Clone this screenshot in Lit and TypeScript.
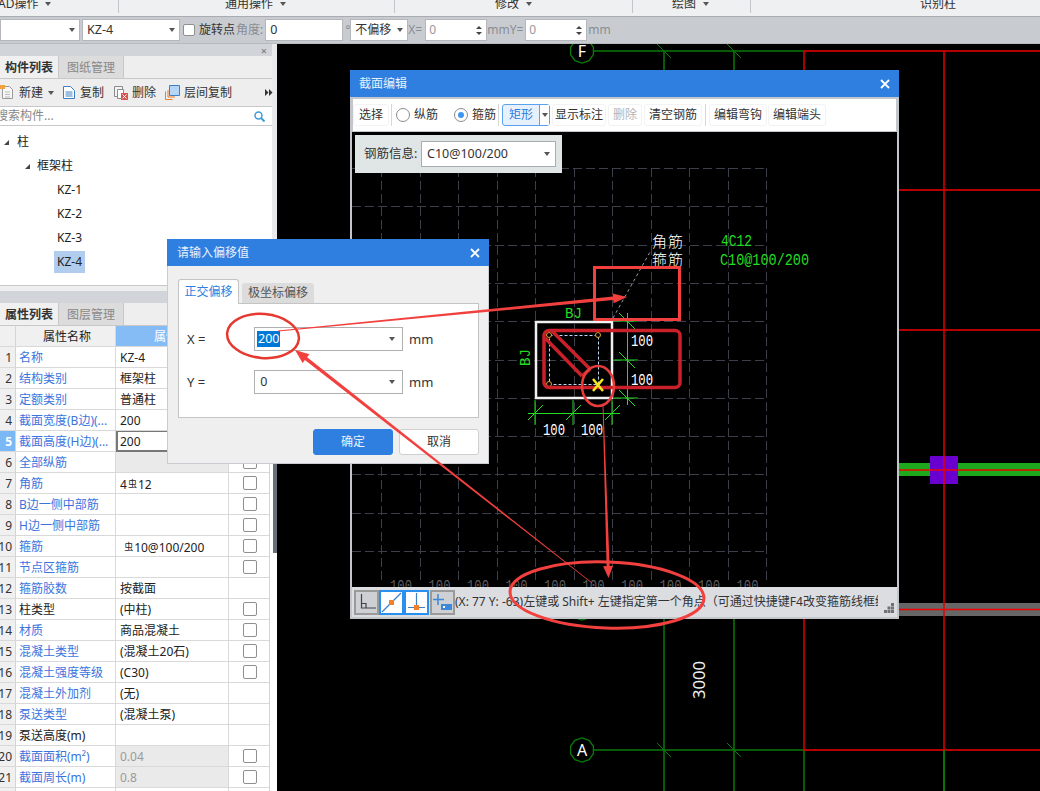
import { LitElement, css, html, svg } from "lit";
import { customElement } from "lit/decorators.js";

interface PropRow {
  name: string;
  value?: unknown;
  link?: boolean;
  check?: boolean;
  muted?: boolean;
  shaded?: boolean;
  current?: boolean;
}

const rebar = html`<span class="rebar">虫</span>`;

const PROP_ROWS: PropRow[] = [
  { name: "名称", value: "KZ-4", link: true },
  { name: "结构类别", value: "框架柱", link: true },
  { name: "定额类别", value: "普通柱", link: true },
  { name: "截面宽度(B边)(...", value: "200", link: true, check: true },
  { name: "截面高度(H边)(...", value: "200", link: true, check: true, current: true },
  { name: "全部纵筋", link: true, check: true, shaded: true },
  { name: "角筋", value: html`4${rebar}12`, link: true, check: true },
  { name: "B边一侧中部筋", link: true, check: true },
  { name: "H边一侧中部筋", link: true, check: true },
  { name: "箍筋", value: html`&nbsp;${rebar}10@100/200`, link: true, check: true },
  { name: "节点区箍筋", link: true, check: true },
  { name: "箍筋胶数", value: "按截面", link: true },
  { name: "柱类型", value: "(中柱)", check: true },
  { name: "材质", value: "商品混凝土", link: true, check: true },
  { name: "混凝土类型", value: "(混凝土20石)", link: true, check: true },
  { name: "混凝土强度等级", value: "(C30)", link: true, check: true },
  { name: "混凝土外加剂", value: "(无)", link: true },
  { name: "泵送类型", value: "(混凝土泵)", link: true },
  { name: "泵送高度(m)" },
  { name: "截面面积(m²)", value: "0.04", link: true, check: true, muted: true, shaded: true },
  { name: "截面周长(m)", value: "0.8", link: true, check: true, muted: true, shaded: true },
  { name: "" },
];

const GRID_XS = Array.from({ length: 11 }, (_, i) => 381 + i * 38.5);
const GRID_YS = Array.from({ length: 11 }, (_, i) => 168 + i * 38.3);

// tapered annotation arrow, thin at the tail and with a filled head at the tip
function arrowPoints(x1: number, y1: number, x2: number, y2: number, tail: number, neck: number, headW: number, headL: number) {
  const len = Math.hypot(x2 - x1, y2 - y1);
  const ux = (x2 - x1) / len;
  const uy = (y2 - y1) / len;
  const nx = -uy;
  const ny = ux;
  const bx = x2 - ux * headL;
  const by = y2 - uy * headL;
  const p = (x: number, y: number, off: number) => `${(x + nx * off).toFixed(1)},${(y + ny * off).toFixed(1)}`;
  return [
    p(x1, y1, tail / 2),
    p(bx, by, neck / 2),
    p(bx, by, headW / 2),
    `${x2},${y2}`,
    p(bx, by, -headW / 2),
    p(bx, by, -neck / 2),
    p(x1, y1, -tail / 2),
  ].join(" ");
}

function bubble(cx: number, cy: number, label: string) {
  const pts = Array.from({ length: 10 }, (_, i) => {
    const a = (Math.PI / 5) * i + Math.PI / 10;
    return `${(cx + Math.cos(a) * 12).toFixed(1)},${(cy + Math.sin(a) * 12).toFixed(1)}`;
  }).join(" ");
  return svg`<polygon points=${pts} fill="#000" stroke="#0a7a0a" stroke-width="1.3"></polygon>
    <text x=${cx} y=${cy + 6} class="bubble-label" text-anchor="middle">${label}</text>`;
}

const tick = (x: number, y: number, color: string, d = 7) =>
  svg`<line x1=${x - d} y1=${y - d} x2=${x + d} y2=${y + d} stroke=${color} stroke-width="1"></line>`;

@customElement("app-root")
export class AppRoot extends LitElement {
  static styles = css`
    :host {
      display: flex;
      flex-direction: column;
      position: relative;
      width: 1040px;
      height: 791px;
      overflow: hidden;
      background: #000;
      color: #333;
      font: 12px/1.3 "Noto Sans", "Noto Sans CJK SC", sans-serif;
    }
    * {
      box-sizing: border-box;
    }
    .caret {
      display: inline-block;
      width: 0;
      height: 0;
      border: 3.5px solid transparent;
      border-top: 4px solid #555;
      border-bottom: 0;
    }
    .rebar {
      font-size: 9px;
      vertical-align: 2px;
      margin: 0 1px;
    }

    /* ribbon */
    .ribbon {
      display: flex;
      height: 17px;
      flex: none;
      background: #eef0f1;
      border-bottom: 1px solid #a9adb1;
      overflow: hidden;
    }
    .group {
      display: flex;
      align-items: center;
      gap: 7px;
      height: 13px;
      border-right: 1px solid #c4c7ca;
      line-height: 8px;
      font-size: 12px;
    }
    .group span:first-child {
      position: relative;
      top: -3px;
    }
    .group .caret {
      position: relative;
      top: -3px;
    }

    /* drawing options bar */
    .options {
      display: flex;
      align-items: center;
      height: 27px;
      flex: none;
      background: #c8ccd1;
      border-bottom: 1px solid #b6babf;
      color: #333;
    }
    .combo {
      display: flex;
      align-items: center;
      justify-content: space-between;
      height: 22px;
      padding: 0 4px;
      background: #fff;
      border: 1px solid #b4b8bc;
      font-size: 12.5px;
    }
    .box {
      width: 12px;
      height: 12px;
      margin-left: 3px;
      background: #fff;
      border: 1px solid #8f8f8f;
      border-radius: 2px;
    }
    .dim {
      color: #8a8d91;
    }
    .spin {
      display: flex;
      align-items: center;
      justify-content: space-between;
      width: 62px;
      height: 22px;
      padding: 0 4px 0 3px;
      background: #fff;
      border: 1px solid #b4b8bc;
      color: #999;
    }
    .arrows {
      display: flex;
      flex-direction: column;
      gap: 3px;
    }
    .arrows i {
      display: block;
      border: 3px solid transparent;
      border-bottom: 3px solid #444;
      border-top: 0;
    }
    .arrows i + i {
      border-top: 3px solid #444;
      border-bottom: 0;
    }

    /* main split */
    .main {
      display: flex;
      flex: 1;
      min-height: 0;
    }
    .left {
      display: flex;
      flex-direction: column;
      width: 277px;
      flex: none;
      background: #fff;
    }
    .upper {
      flex: none;
      border-right: 5px solid #e9eaec;
    }
    .lower {
      display: flex;
      flex-direction: column;
      flex: 1;
      min-height: 0;
      width: 272px;
    }
    .strip {
      display: flex;
      justify-content: flex-end;
      align-items: center;
      height: 12px;
      flex: none;
      padding-right: 5px;
      background: #d1d4d9;
      color: #777;
      font-size: 11px;
      line-height: 1;
    }
    .tabs {
      display: flex;
      height: 23px;
      flex: none;
      background: #eeeeee;
      border-bottom: 1px solid #c8c8c8;
    }
    .tab {
      display: flex;
      align-items: center;
      justify-content: center;
      width: 58px;
      padding-top: 2px;
      font-weight: 700;
      color: #333;
      background: #f0f0f0;
    }
    .tab.off {
      width: 66px;
      font-weight: 400;
      color: #888;
      background: #dcdcdc;
      border-right: 1px solid #c8c8c8;
      border-left: 1px solid #c8c8c8;
    }
    .actions {
      display: flex;
      align-items: center;
      height: 28px;
      flex: none;
      background: #eeeeee;
      border-bottom: 1px solid #c8c8c8;
      white-space: nowrap;
    }
    .actions svg,
    .actions span {
      flex: none;
    }
    .search {
      display: flex;
      align-items: center;
      justify-content: space-between;
      height: 19px;
      flex: none;
      padding-right: 7px;
      color: #888;
      border-bottom: 1px solid #c8c8c8;
    }
    .search span {
      margin-left: -4px;
    }
    .tree {
      display: flex;
      flex-direction: column;
      height: 160px;
      flex: none;
      padding-top: 4px;
      border-bottom: 1px solid #c8c8c8;
      color: #222;
    }
    .node {
      display: flex;
      align-items: center;
      height: 24px;
      flex: none;
    }
    .node .fold {
      width: 0;
      height: 0;
      margin-right: 7px;
      border-left: 5px solid transparent;
      border-bottom: 5px solid #444;
    }
    .node .sel {
      padding: 3px 3px;
      background: #b0cdee;
    }
    .gap {
      height: 5px;
      flex: none;
      background: #eeeeee;
    }

    /* property table */
    .table {
      flex: 1;
      min-height: 0;
      overflow: hidden;
      width: 270px;
      border-right: 1px solid #d4d4d4;
    }
    .row {
      display: grid;
      grid-template-columns: 16px 100px 113px 41px;
      height: 21px;
      border-bottom: 1px solid #d9d9d9;
      line-height: 22px;
    }
    .row > div {
      min-width: 0;
      white-space: nowrap;
      overflow: hidden;
    }
    .row.head {
      height: 21px;
      background: #f0f0f0;
      text-align: center;
    }
    .row.head .val {
      background: #85bcf5;
      color: #fff;
      padding: 0;
    }
    .num {
      background: #f0f0f0;
      border-right: 1px solid #d4d4d4;
      text-align: right;
      padding-right: 3px;
      direction: rtl;
    }
    .row.current .num {
      background: #7ab8f5;
      color: #fff;
      font-weight: 700;
    }
    .nm {
      padding-left: 3px;
      border-right: 1px solid #d9d9d9;
      color: #222;
    }
    .nm.link {
      color: #3b74dd;
    }
    .val {
      padding-left: 4px;
      border-right: 1px solid #d9d9d9;
      color: #222;
    }
    .val.muted {
      color: #9a9a9a;
    }
    .val.shaded {
      background: #eaeaea;
    }
    .row.current .val {
      padding-left: 2px;
      line-height: 19px;
      border: 2px solid #777;
      border-top-width: 1px;
      margin-bottom: -1px;
    }
    .chk {
      display: flex;
      align-items: center;
      justify-content: center;
    }
    .chk i {
      display: block;
      width: 14px;
      height: 14px;
      background: #fff;
      border: 1px solid #8f8f8f;
      border-radius: 2px;
    }
    .scroll {
      position: absolute;
      left: 273px;
      top: 440px;
      width: 4px;
      height: 113px;
      background: #67707a;
    }

    .cad {
      position: relative;
      flex: 1;
      background: #000;
    }
    .cad svg,
    .marks {
      position: absolute;
      left: 0;
      top: 0;
    }
    .bubble-label {
      fill: #fff;
      font: 16px "Noto Sans", sans-serif;
    }

    /* floating windows */
    .win {
      position: absolute;
      display: flex;
      flex-direction: column;
      background: #efefef;
    }
    .title {
      display: flex;
      align-items: center;
      justify-content: space-between;
      flex: none;
      background: #2e7fe0;
      color: #e8f1fc;
    }
    .section {
      left: 350px;
      top: 70px;
      width: 549px;
      height: 549px;
      background: #c3c7cc;
      border: solid #c3c7cc;
      border-width: 0 2px 2px;
    }
    .section .title {
      height: 27px;
      margin: 0 -2px;
      padding: 0 9px 0 9px;
    }
    .tools {
      display: flex;
      align-items: center;
      height: 32px;
      flex: none;
      margin: 2px 1px 1px 1px;
      background: #fff;
      color: #333;
    }
    .tool {
      display: flex;
      align-items: center;
      justify-content: center;
      height: 22px;
      background: #fff;
      border: 1px solid #f3f3f3;
      border-radius: 3px;
    }
    .tool.disabled {
      color: #b4b4b4;
    }
    .sep {
      width: 1px;
      height: 22px;
      background: #d5d7d9;
    }
    .radio {
      display: flex;
      align-items: center;
      justify-content: center;
      width: 14px;
      height: 14px;
      border: 1px solid #8a8a8a;
      border-radius: 50%;
      background: #fff;
    }
    .radio.on::after {
      content: "";
      width: 6px;
      height: 6px;
      border-radius: 50%;
      background: #3f96f0;
    }
    .split {
      display: flex;
      width: 48px;
      height: 22px;
      margin-left: 3px;
      border: 1px solid #5aa2ee;
      border-radius: 3px;
      background: #e6f1fd;
      color: #2a7de0;
    }
    .split span {
      flex: 1;
      text-align: center;
      line-height: 20px;
    }
    .split div {
      display: flex;
      align-items: center;
      justify-content: center;
      width: 10px;
      background: #fff;
      border-left: 1px solid #5aa2ee;
    }
    .board {
      position: relative;
      flex: 1;
      min-height: 0;
      overflow: hidden;
      background: #000;
    }
    .board svg {
      position: absolute;
      left: 0;
      top: 0;
    }
    .rebar-info {
      position: absolute;
      left: 3px;
      top: 3px;
      display: flex;
      align-items: center;
      width: 207px;
      height: 38px;
      padding-left: 9px;
      background: #e0e6e6;
      font-size: 12.5px;
    }
    .rebar-info label {
      width: 57px;
      white-space: nowrap;
    }
    .rebar-info .combo {
      width: 135px;
      height: 26px;
      padding: 0 5px;
      border: 1px solid #a8acb0;
    }
    .status {
      display: flex;
      align-items: center;
      height: 30px;
      flex: none;
      padding-left: 2px;
      background: #dcdde1;
      color: #333;
      position: relative;
    }
    .mode {
      display: flex;
      align-items: center;
      justify-content: center;
      width: 25px;
      height: 25px;
      background: #cfd0d3;
      border: 2px solid #9a9a9a;
    }
    .mode.on {
      background: #fff;
      border-color: #2a90f0;
    }
    .hint {
      width: 423px;
      overflow: hidden;
      white-space: nowrap;
    }
    .grip {
      position: absolute;
      right: 3px;
      bottom: 4px;
    }

    .offset {
      left: 167px;
      top: 239px;
      width: 322px;
      height: 225px;
      border: 1px solid #c9ccd0;
      border-top: 0;
    }
    .offset .title {
      height: 27px;
      margin: 0 -1px;
      padding: 0 9px 0 10px;
    }
    .page-tabs {
      display: flex;
      align-items: flex-end;
      height: 37px;
      flex: none;
      padding-left: 10px;
    }
    .page-tab {
      display: flex;
      align-items: center;
      justify-content: center;
      width: 61px;
      height: 25px;
      margin-bottom: -1px;
      position: relative;
      background: #fff;
      border: 1px solid #c4c4c4;
      border-bottom: 0;
      border-radius: 3px 3px 0 0;
      color: #2e7fe0;
    }
    .page-tab.off {
      width: 72px;
      height: 20px;
      margin-left: 3px;
      margin-bottom: 0;
      background: #dcdcdc;
      border: 0;
      color: #555;
    }
    .page {
      display: flex;
      flex-direction: column;
      gap: 19px;
      width: 301px;
      height: 115px;
      margin-left: 10px;
      padding-top: 23px;
      background: #fff;
      border: 1px solid #c4c4c4;
    }
    .field {
      display: flex;
      align-items: center;
      padding-left: 8px;
      height: 24px;
      font-size: 13px;
    }
    .field b {
      width: 67px;
      font-weight: 400;
    }
    .field .combo {
      width: 149px;
      height: 24px;
      padding: 0 7px 0 2px;
      border: 1px solid #b0b0b0;
    }
    .field .mm {
      margin-left: 6px;
    }
    .selected {
      padding: 0 1px;
      background: #0078d7;
      color: #fff;
    }
    .buttons {
      display: flex;
      justify-content: flex-end;
      gap: 6px;
      margin-top: 11px;
      padding-right: 9px;
    }
    .btn {
      display: flex;
      align-items: center;
      justify-content: center;
      width: 80px;
      height: 26px;
      background: #fff;
      border: 1px solid #d0d0d0;
      border-radius: 3px;
    }
    .btn.primary {
      background: #2e7fe0;
      border-color: #2e7fe0;
      color: #e8f1fc;
    }
    .marks {
      pointer-events: none;
    }
  `;

  private renderClose() {
    return html`<svg width="10" height="10" viewBox="0 0 10 10"><path d="M1 1l8 8M9 1l-8 8" stroke="#fff" stroke-width="1.8"></path></svg>`;
  }

  private renderRibbon() {
    return html`<div class="ribbon">
      <div class="group" style="width:119px"><span style="margin-left:-2px">AD操作</span><i class="caret"></i></div>
      <div class="group" style="width:276px;padding-left:106px"><span>通用操作</span><i class="caret"></i></div>
      <div class="group" style="width:238px;padding-left:100px"><span>修改</span><i class="caret"></i></div>
      <div class="group" style="width:118px;padding-left:39px"><span>绘图</span><i class="caret"></i></div>
      <div class="group" style="padding-left:169px;border:0"><span>识别柱</span></div>
    </div>`;
  }

  private renderOptionsBar() {
    const spin = (left: number) => html`<div class="spin" style="margin-left:${left}px">
      <span>0</span>
      <div class="arrows"><i></i><i></i></div>
    </div>`;
    return html`<div class="options">
      <div class="combo" style="width:80px;justify-content:flex-end"><i class="caret"></i></div>
      <div class="combo" style="width:98px;margin-left:2px"><span>KZ-4</span><i class="caret"></i></div>
      <div class="box" style="margin-left:3px"></div>
      <span style="margin-left:4px">旋转点</span>
      <span class="dim" style="margin-left:1px">角度:</span>
      <div class="combo" style="width:78px;margin-left:2px">0</div>
      <span class="dim" style="margin-left:2px;width:5px">°</span>
      <div class="combo" style="width:58px;margin-left:0;font-size:12px"><span>不偏移</span><i class="caret"></i></div>
      <span class="dim" style="width:17px">X=</span>
      ${spin(0)}
      <span class="dim" style="width:38px">mmY=</span>
      ${spin(0)}
      <span class="dim" style="margin-left:1px">mm</span>
    </div>`;
  }

  private renderActions() {
    return html`<div class="actions">
      <svg width="15" height="15" viewBox="0 0 15 15" style="margin-left:0">
        <path d="M2.5 1.5h7l3 3v9h-10z" fill="#f7f7f7" stroke="#9a9a9a"></path>
        <path d="M5 7h5M5 9.500h5M5 12h5" stroke="#b8b8b8"></path>
        <path d="M0 0h5v4H0z" fill="#f1a23c"></path>
      </svg>
      <span style="margin-left:4px">新建</span>
      <i class="caret" style="margin-left:5px"></i>
      <svg width="14" height="15" viewBox="0 0 14 15" style="margin-left:8px">
        <path d="M1.500 1.500h7l4 4v8h-11z" fill="#fff" stroke="#3d80c8"></path>
        <path d="M3.500 7h7M3.500 9h7M3.500 11h7" stroke="#3d80c8"></path>
      </svg>
      <span style="margin-left:4px">复制</span>
      <svg width="15" height="15" viewBox="0 0 15 15" style="margin-left:9px">
        <path d="M1.500 1.500h8v10h-8z" fill="#f4f4f4" stroke="#8c8c8c"></path>
        <path d="M4.500 4.500h6v9h-6z" fill="#fff" stroke="#8c8c8c"></path>
        <path d="M8 8h7v7H8z" fill="#d9534f"></path>
        <path d="M9.500 9.500l4 4M13.500 9.500l-4 4" stroke="#fff"></path>
      </svg>
      <span style="margin-left:4px">删除</span>
      <svg width="15" height="15" viewBox="0 0 15 15" style="margin-left:9px">
        <path d="M.5 6.500v8h7M3 5v7h7" fill="none" stroke="#ef7d22"></path>
        <path d="M4.500.5h10v10h-10z" fill="#b6d6f7" stroke="#3d80c8"></path>
      </svg>
      <span style="margin-left:4px">层间复制</span>
      <svg width="8" height="7" viewBox="0 0 8 7" style="margin-left:33px">
        <path d="M0 0l3.500 3.500L0 7zM4 0l3.500 3.500L4 7z" fill="#333"></path>
      </svg>
    </div>`;
  }

  private renderTree() {
    return html`<div class="tree">
      <div class="node" style="padding-left:4px"><i class="fold" style="margin-right:8px"></i>柱</div>
      <div class="node" style="padding-left:25px"><i class="fold"></i>框架柱</div>
      <div class="node" style="padding-left:57px">KZ-1</div>
      <div class="node" style="padding-left:57px">KZ-2</div>
      <div class="node" style="padding-left:57px">KZ-3</div>
      <div class="node" style="padding-left:54px"><span class="sel">KZ-4</span></div>
    </div>`;
  }

  private renderTable() {
    return html`<div class="table">
      <div class="row head">
        <div class="num"></div>
        <div class="nm">属性名称</div>
        <div class="val">属性值</div>
        <div>附加</div>
      </div>
      ${PROP_ROWS.map(
        (r, i) => html`<div class="row ${r.current ? "current" : ""}">
          <div class="num">${i + 1}</div>
          <div class="nm ${r.link ? "link" : ""}">${r.name}</div>
          <div class="val ${r.muted ? "muted" : ""} ${r.shaded ? "shaded" : ""}">${r.value ?? ""}</div>
          <div class="chk">${r.check ? html`<i></i>` : ""}</div>
        </div>`
      )}
    </div>`;
  }

  private renderCad() {
    // coordinates are page pixels, the canvas starts at (277,44)
    return html`<svg width="763" height="747" viewBox="277 44 763 747">
      ${[664, 734].map((x) => svg`<line x1=${x} y1="51" x2=${x} y2="791" stroke="#0a7a0a" stroke-width="1.500"></line>`)}
      ${[664, 734].map((x) => tick(x, 51, "#0a7a0a"))}
      ${[664, 734].map((x) => tick(x, 750, "#0a7a0a"))}
      <line x1="594" y1="51" x2="804" y2="51" stroke="#0a7a0a" stroke-width="1.500"></line>
      <line x1="594" y1="750" x2="804" y2="750" stroke="#0a7a0a" stroke-width="1.500"></line>
      ${[804, 944].map((x) => svg`<line x1=${x} y1="750" x2=${x} y2="791" stroke="#0a7a0a" stroke-width="1.500"></line>`)}
      <rect x="899" y="463" width="141" height="13" fill="#1ea81e"></rect>
      <rect x="899" y="603" width="141" height="13" fill="#666"></rect>
      <rect x="930" y="456" width="28" height="28" fill="#6a00d0"></rect>
      ${[51, 190, 330, 470, 609.5, 750].map(
        (y) => svg`<line x1="804" y1=${y} x2="1040" y2=${y} stroke="#f00000" stroke-width="1.300"></line>`
      )}
      ${[804, 944].map((x) => svg`<line x1=${x} y1="51" x2=${x} y2="750" stroke="#e00000" stroke-width="1.500"></line>`)}
      <line x1="944" y1="750" x2="944" y2="791" stroke="#0a7a0a" stroke-width="1.500"></line>
      ${bubble(582, 51, "F")}
      ${bubble(582, 750, "A")}
      ${bubble(582, 608, "")}
      <text transform="translate(705 699) rotate(-90)" textLength="38" lengthAdjust="spacingAndGlyphs" fill="#f2f2f2" font-size="17" font-family="Noto Sans, sans-serif">3000</text>
    </svg>`;
  }

  private renderSectionDrawing() {
    const mono = `"Liberation Mono", monospace`;
    const dimText = (x: number, y: number, t: string, w: number, fill = "#fff") =>
      svg`<text x=${x} y=${y} textLength=${w} lengthAdjust="spacingAndGlyphs" fill=${fill} font-size="16" font-family=${mono}>${t}</text>`;
    return html`<svg width="545" height="455" viewBox="352 132 545 455">
      <g stroke="#3c3f4a" stroke-width="1" stroke-dasharray="9 4" fill="none">
        ${GRID_YS.map((y) => svg`<line x1="352" y1=${Math.round(y) + 0.5} x2="766" y2=${Math.round(y) + 0.5}></line>`)}
        ${GRID_XS.map((x) => svg`<line x1=${Math.round(x) + 0.5} y1="168" x2=${Math.round(x) + 0.5} y2="583"></line>`)}
      </g>
      ${GRID_XS.slice(0, 10).map((x) => dimText(x + 9, 591, "100", 22, "#5c5c5c"))}

      <rect x="536" y="322" width="76" height="76" fill="none" stroke="#f0f0f0" stroke-width="2.500"></rect>
      <rect x="549.500" y="335.500" width="49" height="49" fill="none" stroke="#bcd8f4" stroke-dasharray="3 2"></rect>
      ${[[549, 335], [598, 335], [549, 384]].map(
        ([x, y]) => svg`<circle cx=${x} cy=${y} r="2.500" fill="#000" stroke="#e2a52a"></circle>`
      )}

      <!-- dimensions -->
      <g stroke="#22dd22" stroke-width="1" fill="none">
        <line x1="528" y1="413.500" x2="620" y2="413.500"></line>
        <line x1="627.500" y1="313" x2="627.500" y2="405"></line>
        ${[535, 573, 612].map((x) => svg`<line x1=${x} y1="400" x2=${x} y2="425"></line>`)}
        ${[535, 573, 612].map((x) => svg`<line x1=${x - 7} y1="420" x2=${x + 8} y2="405"></line>`)}
        ${[321, 360, 398].map((y) => svg`<line x1="614" y1=${y} x2="638" y2=${y}></line>`)}
        ${[321, 360, 398].map((y) => svg`<line x1="619" y1=${y - 8} x2="635" y2=${y + 8}></line>`)}
      </g>
      ${dimText(631, 346, "100", 22)} ${dimText(631, 385, "100", 22)}
      ${dimText(543, 435, "100", 22)} ${dimText(581, 435, "100", 22)}
      <text x="565" y="318" textLength="17" lengthAdjust="spacingAndGlyphs" fill="#22dd22" font-size="15" font-family=${mono}>BJ</text>
      <text transform="translate(530 366) rotate(-90)" textLength="17" lengthAdjust="spacingAndGlyphs" fill="#22dd22" font-size="15" font-family=${mono}>BJ</text>

      <line x1="613" y1="318" x2="650" y2="252" stroke="#9a9a9a" stroke-dasharray="3 3"></line>
      <text x="652" y="247" fill="#fff" font-size="15" letter-spacing="1" font-weight="300" font-family="Noto Sans CJK SC, sans-serif">角筋</text>
      <text x="652" y="265" fill="#fff" font-size="15" letter-spacing="1" font-weight="300" font-family="Noto Sans CJK SC, sans-serif">箍筋</text>
      ${dimText(721, 246, "4C12", 31, "#22dd22")}
      ${dimText(720, 265, "C10@100/200", 89, "#22dd22")}
    </svg>`;
  }

  private renderSection() {
    return html`<div class="win section">
      <div class="title">截面编辑 ${this.renderClose()}</div>
      <div class="tools">
        <div class="tool" style="width:36px">选择</div>
        <div class="sep" style="margin-left:2px"></div>
        <div class="radio" style="margin-left:4px"></div>
        <span style="margin-left:4px">纵筋</span>
        <div class="radio on" style="margin-left:16px"></div>
        <span style="margin-left:4px">箍筋</span>
        <div class="sep" style="margin-left:2px"></div>
        <div class="split"><span>矩形</span><div><i class="caret"></i></div></div>
        <div class="tool" style="width:54px;margin-left:2px">显示标注</div>
        <div class="tool disabled" style="width:34px;margin-left:2px">删除</div>
        <div class="tool" style="width:58px;margin-left:2px">清空钢筋</div>
        <div class="sep" style="margin-left:3px"></div>
        <div class="tool" style="width:58px;margin-left:3px">编辑弯钩</div>
        <div class="tool" style="width:58px;margin-left:1px">编辑端头</div>
      </div>
      <div class="board">
        ${this.renderSectionDrawing()}
        <div class="rebar-info">
          <label>钢筋信息:</label>
          <div class="combo"><span>C10@100/200</span><i class="caret"></i></div>
        </div>
      </div>
      <div class="status">
        <div class="mode">
          <svg width="20" height="20" viewBox="0 0 20 20"><path d="M4.500 2v14H19M4.500 11.500h4.500v4.500" fill="none" stroke="#444" stroke-width="1.200"></path></svg>
        </div>
        <div class="mode on">
          <svg width="21" height="21" viewBox="0 0 21 21"><path d="M1 20L20 1" stroke="#3d80c8" stroke-width="1.200"></path><rect x="8" y="8" width="5" height="5" fill="#f0802a"></rect></svg>
        </div>
        <div class="mode on">
          <svg width="21" height="21" viewBox="0 0 21 21"><path d="M10.500 1v15M2 15.500h17" stroke="#3d80c8" stroke-width="1.200"></path><rect x="8" y="13" width="5" height="5" fill="#f0802a"></rect></svg>
        </div>
        <div class="mode" style="margin-left:1px">
          <svg width="21" height="21" viewBox="0 0 21 21"><path d="M6 2v11M1 7.500h11" stroke="#3d88d8" stroke-width="1.500"></path><rect x="9" y="12" width="11" height="6" fill="#3d88d8"></rect><rect x="11" y="14" width="2" height="2" fill="#fff"></rect></svg>
        </div>
        <div class="hint">(X: 77 Y: -63)左键或 Shift+ 左键指定第一个角点（可通过快捷键F4改变箍筋线框绘制方式）</div>
        <svg class="grip" width="10" height="10" viewBox="0 0 10 10"><path d="M7 0h3v3H7zM3.500 3.500h3v3h-3zM7 3.500h3v3H7zM0 7h3v3H0zM3.500 7h3v3h-3zM7 7h3v3H7z" fill="#6e7278"></path></svg>
      </div>
    </div>`;
  }

  private renderOffset() {
    return html`<div class="win offset">
      <div class="title">请输入偏移值 ${this.renderClose()}</div>
      <div class="page-tabs">
        <div class="page-tab">正交偏移</div>
        <div class="page-tab off">极坐标偏移</div>
      </div>
      <div class="page">
        <div class="field">
          <b>X =</b>
          <div class="combo"><span class="selected">200</span><i class="caret"></i></div>
          <span class="mm">mm</span>
        </div>
        <div class="field">
          <b>Y =</b>
          <div class="combo"><span>&nbsp;0</span><i class="caret"></i></div>
          <span class="mm">mm</span>
        </div>
      </div>
      <div class="buttons">
        <div class="btn primary">确定</div>
        <div class="btn">取消</div>
      </div>
    </div>`;
  }

  private renderMarks() {
    const red = "#f2403f";
    return html`<svg class="marks" width="1040" height="791" viewBox="0 0 1040 791">
      <rect x="594.500" y="267.500" width="85" height="52" fill="none" stroke=${red} stroke-width="3"></rect>
      <rect x="544" y="330.500" width="136" height="57" rx="5" fill="none" stroke="#c9202a" stroke-width="3.500"></rect>
      <path d="M545 338l37 38M552 331l38 38M582 376l8-7" fill="none" stroke="#c9202a" stroke-width="3.500"></path>
      <path d="M593 379l10 12M603 379l-10 12" fill="none" stroke="#f4e81e" stroke-width="2.500"></path>
      <ellipse cx="598" cy="386" rx="16" ry="20" fill="none" stroke="#e83c3c" stroke-width="2.500"></ellipse>
      <ellipse cx="263" cy="336" rx="36" ry="22" transform="rotate(5 263 336)" fill="none" stroke="#e6392f" stroke-width="2.500"></ellipse>
      <ellipse cx="607" cy="595" rx="97" ry="33" transform="rotate(2 607 595)" fill="none" stroke=${red} stroke-width="3"></ellipse>
      <polygon points=${arrowPoints(278, 331, 627, 297, 0.8, 3.5, 10, 14)} fill=${red}></polygon>
      <polygon points=${arrowPoints(592, 583, 295, 350, 0.8, 3.5, 11, 14)} fill=${red}></polygon>
      <polygon points=${arrowPoints(603, 405, 608.5, 578, 0.8, 3, 10, 12)} fill=${red}></polygon>
    </svg>`;
  }

  render() {
    return html`
      ${this.renderRibbon()} ${this.renderOptionsBar()}
      <div class="main">
        <div class="left">
          <div class="upper">
            <div class="strip">×</div>
            <div class="tabs">
              <div class="tab">构件列表</div>
              <div class="tab off">图纸管理</div>
            </div>
            ${this.renderActions()}
            <div class="search">
              <span>搜索构件...</span>
              <svg width="11" height="11" viewBox="0 0 11 11"><circle cx="4.500" cy="4.500" r="3.500" fill="none" stroke="#3f9bd8" stroke-width="1.500"></circle><path d="M7 7l3.500 3.500" stroke="#3f9bd8" stroke-width="2"></path></svg>
            </div>
            ${this.renderTree()}
            <div class="gap"></div>
          </div>
          <div class="lower">
            <div class="strip"></div>
            <div class="tabs">
              <div class="tab">属性列表</div>
              <div class="tab off">图层管理</div>
            </div>
            ${this.renderTable()}
          </div>
        </div>
        <div class="cad">${this.renderCad()}</div>
      </div>
      <div class="scroll"></div>
      ${this.renderSection()} ${this.renderOffset()} ${this.renderMarks()}
    `;
  }
}

declare global {
  interface HTMLElementTagNameMap {
    "app-root": AppRoot;
  }
}
